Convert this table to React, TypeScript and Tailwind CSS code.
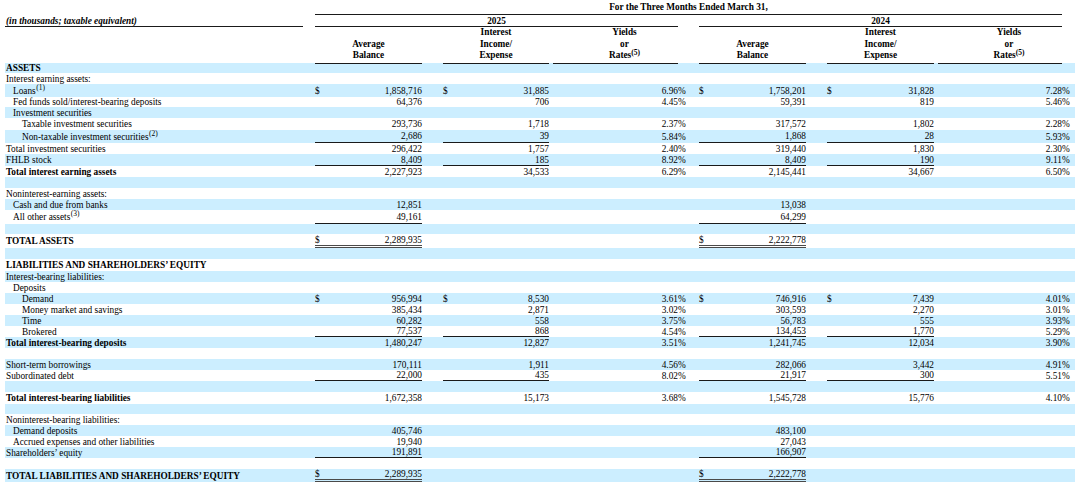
type Row = {
  l?: string;
  sup?: string;
  ind?: number;
  b?: boolean;
  h?: number;
  v?: string[];
  d?: "all" | "avg";
  u?: "both" | "avg" | "dbl";
};

const rows: Row[] = [
  { l: "ASSETS", b: true, h: 10 },
  { l: "Interest earning assets:" },
  { l: "Loans", sup: "(1)", ind: 1, h: 13, v: ["1,858,716", "31,885", "6.96", "1,758,201", "31,828", "7.28"], d: "all" },
  { l: "Fed funds sold/interest-bearing deposits", ind: 1, h: 10, v: ["64,376", "706", "4.45", "59,391", "819", "5.46"] },
  { l: "Investment securities", ind: 1 },
  { l: "Taxable investment securities", ind: 2, h: 12, v: ["293,736", "1,718", "2.37", "317,572", "1,802", "2.28"] },
  { l: "Non-taxable investment securities", sup: "(2)", ind: 2, h: 13, v: ["2,686", "39", "5.84", "1,868", "28", "5.93"], u: "both" },
  { l: "Total investment securities", v: ["296,422", "1,757", "2.40", "319,440", "1,830", "2.30"] },
  { l: "FHLB stock", h: 12, v: ["8,409", "185", "8.92", "8,409", "190", "9.11"], u: "both" },
  { l: "Total interest earning assets", b: true, v: ["2,227,923", "34,533", "6.29", "2,145,441", "34,667", "6.50"] },
  {},
  { l: "Noninterest-earning assets:" },
  { l: "Cash and due from banks", ind: 1, v: ["12,851", "", "", "13,038", "", ""] },
  { l: "All other assets", sup: "(3)", ind: 1, h: 14, v: ["49,161", "", "", "64,299", "", ""], u: "avg" },
  { h: 10 },
  { l: "TOTAL ASSETS", b: true, h: 14, v: ["2,289,935", "", "", "2,222,778", "", ""], d: "avg", u: "dbl" },
  {},
  { l: "LIABILITIES AND SHAREHOLDERS’ EQUITY", b: true, h: 12 },
  { l: "Interest-bearing liabilities:" },
  { l: "Deposits", ind: 1 },
  { l: "Demand", ind: 2, v: ["956,994", "8,530", "3.61", "746,916", "7,439", "4.01"], d: "all" },
  { l: "Money market and savings", ind: 2, v: ["385,434", "2,871", "3.02", "303,593", "2,270", "3.01"] },
  { l: "Time", ind: 2, v: ["60,282", "558", "3.75", "56,783", "555", "3.93"] },
  { l: "Brokered", ind: 2, v: ["77,537", "868", "4.54", "134,453", "1,770", "5.29"], u: "both" },
  { l: "Total interest-bearing deposits", b: true, v: ["1,480,247", "12,827", "3.51", "1,241,745", "12,034", "3.90"] },
  {},
  { l: "Short-term borrowings", v: ["170,111", "1,911", "4.56", "282,066", "3,442", "4.91"] },
  { l: "Subordinated debt", v: ["22,000", "435", "8.02", "21,917", "300", "5.51"], u: "both" },
  {},
  { l: "Total interest-bearing liabilities", b: true, h: 12, v: ["1,672,358", "15,173", "3.68", "1,545,728", "15,776", "4.10"] },
  { h: 10 },
  { l: "Noninterest-bearing liabilities:" },
  { l: "Demand deposits", ind: 1, v: ["405,746", "", "", "483,100", "", ""] },
  { l: "Accrued expenses and other liabilities", ind: 1, v: ["19,940", "", "", "27,043", "", ""] },
  { l: "Shareholders’ equity", v: ["191,891", "", "", "166,907", "", ""], u: "avg" },
  {},
  { l: "TOTAL LIABILITIES AND SHAREHOLDERS’ EQUITY", b: true, h: 13, v: ["2,289,935", "", "", "2,222,778", "", ""], d: "avg", u: "dbl" },
];

const heights: Record<number, string> = {
  10: "h-[10px]",
  11: "h-[11px]",
  12: "h-[12px]",
  13: "h-[13px]",
  14: "h-[14px]",
};

const indents = ["pl-[1px]", "pl-[8px]", "pl-[17px]"];

const cols =
  "grid grid-cols-[305px_5px_12px_95px_21px_12px_94px_4px_125px_12px_9px_12px_95px_21px_12px_95px_4px_124px_13px]";

function DataRow({ r, i }: { r: Row; i: number }) {
  const bg = i % 2 === 0 ? "bg-[#cceeff]" : "bg-white";
  const v = r.v ?? ["", "", "", "", "", ""];
  const single = "border-b border-[#1a1a1a]";
  const avgLine = r.u === "dbl" ? "border-b-[3px] border-double border-[#4a4a4a]" : r.u ? single : "";
  const intLine = r.u === "both" ? single : "";
  const cell = "flex items-center";
  const num = "flex items-center justify-end";

  const year = (avg: string, int: string, yld: string) => [
    <div key="ad" className={`${cell} ${avgLine}`}>{r.d ? "$" : ""}</div>,
    <div key="av" className={`${num} ${avgLine}`}>{avg}</div>,
    <div key="g1" />,
    <div key="id" className={`${cell} ${intLine}`}>{r.d === "all" ? "$" : ""}</div>,
    <div key="iv" className={`${num} ${intLine}`}>{int}</div>,
    <div key="g2" />,
    <div key="yv" className={num}>{yld}</div>,
    <div key="yp" className={cell}>{yld ? "%" : ""}</div>,
  ];

  return (
    <div className={`${cols} ${heights[r.h ?? 11]} ${bg}`}>
      <div className={`${cell} ${indents[r.ind ?? 0]} ${r.b ? "font-bold" : ""} whitespace-nowrap`}>
        {r.l}
        {r.sup && <sup className="text-[7.5px] -top-[3px] ml-[0.5px]">{r.sup}</sup>}
      </div>
      <div />
      {year(v[0], v[1], v[2])}
      <div />
      {year(v[3], v[4], v[5])}
    </div>
  );
}

function HeaderCols({ start }: { start: number }) {
  const h =
    "flex flex-col justify-end items-center text-center border-b border-[#1a1a1a] pb-[1px] leading-[11.5px] font-bold";
  return (
    <>
      <div className={`${h} ${start === 3 ? "col-start-3" : "col-start-12"} col-span-2`}>
        <span>Average</span>
        <span>Balance</span>
      </div>
      <div className={`${h} ${start === 3 ? "col-start-6" : "col-start-15"} col-span-2`}>
        <span>Interest</span>
        <span>Income/</span>
        <span>Expense</span>
      </div>
      <div className={`${h} ${start === 3 ? "col-start-9" : "col-start-18"} col-span-1 pl-[18px]`}>
        <span>Yields</span>
        <span>or</span>
        <span>
          Rates<sup className="text-[7.5px] -top-[3px]">(5)</sup>
        </span>
      </div>
    </>
  );
}

export default function App() {
  return (
    <div className="w-[1080px] h-[492px] bg-white overflow-hidden text-black font-['Liberation_Serif',serif] text-[9.3px] leading-[10px]">
      <div className="ml-[5px] w-[1070px]">
        <div className={`${cols} h-[15px]`}>
          <div className="col-start-3 col-span-16 flex items-center justify-center font-bold border-b border-[#1a1a1a]">
            For the Three Months Ended March 31,
          </div>
        </div>
        <div className={`${cols} h-[12px]`}>
          <div className="col-start-1 pr-[7px]">
            <div className="h-full flex items-center pl-[1px] font-bold italic border-b border-[#1a1a1a]">
              (in thousands; taxable equivalent)
            </div>
          </div>
          <div className="col-start-3 col-span-7 flex items-center justify-center font-bold border-b border-[#1a1a1a]">
            2025
          </div>
          <div className="col-start-12 col-span-7 flex items-center justify-center font-bold border-b border-[#1a1a1a]">
            2024
          </div>
        </div>
        <div className={`${cols} h-[36px]`}>
          <HeaderCols start={3} />
          <HeaderCols start={12} />
        </div>
        {rows.map((r, i) => (
          <DataRow key={i} r={r} i={i} />
        ))}
      </div>
    </div>
  );
}
